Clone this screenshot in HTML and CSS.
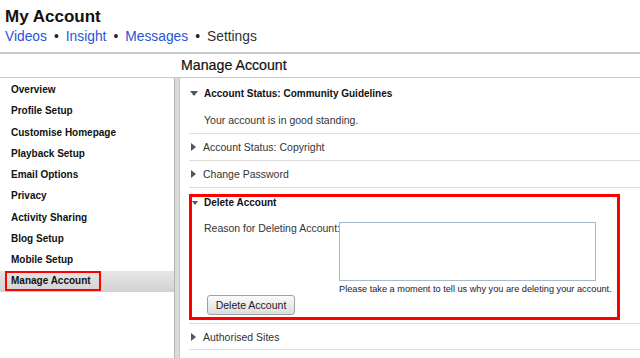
FILE: index.html
```html
<!DOCTYPE html>
<html lang="en">
<head>
    <meta charset="UTF-8">
    <meta name="viewport" content="width=device-width, initial-scale=1.0">
    <title>My Account - Settings</title>
    <link rel="stylesheet" href="styles.css">
</head>
<body>
    <header class="top">
        <h1>My Account</h1>
        <nav class="tabs">
            <a href="#">Videos</a><span class="dot">•</span><a href="#">Insight</a><span class="dot">•</span><a href="#">Messages</a><span class="dot">•</span><span class="current">Settings</span>
        </nav>
    </header>

    <div class="title-bar">
        <h2>Manage Account</h2>
    </div>

    <div class="layout">
        <aside class="sidebar">
            <ul>
                <li>Overview</li>
                <li>Profile Setup</li>
                <li>Customise Homepage</li>
                <li>Playback Setup</li>
                <li>Email Options</li>
                <li>Privacy</li>
                <li>Activity Sharing</li>
                <li>Blog Setup</li>
                <li>Mobile Setup</li>
                <li class="selected"><span class="highlight">Manage Account</span></li>
            </ul>
        </aside>

        <div class="divider"></div>

        <main class="content">
            <section class="panel first">
                <div class="panel-head bold"><span class="caret down"></span>Account Status: Community Guidelines</div>
                <div class="panel-body">Your account is in good standing.</div>
            </section>

            <section class="panel">
                <div class="panel-head"><span class="caret right"></span>Account Status: Copyright</div>
            </section>

            <section class="panel">
                <div class="panel-head"><span class="caret right"></span>Change Password</div>
            </section>

            <section class="panel delete">
                <div class="marked">
                    <div class="delete-head"><span class="caret down"></span>Delete Account</div>
                    <form class="delete-form" onsubmit="event.preventDefault()">
                        <div class="form-row">
                            <label for="reason">Reason for Deleting Account:</label>
                            <textarea id="reason"></textarea>
                        </div>
                        <p class="hint">Please take a moment to tell us why you are deleting your account.</p>
                        <button type="submit" class="btn">Delete Account</button>
                    </form>
                </div>
            </section>

            <section class="panel last">
                <div class="panel-head"><span class="caret right"></span>Authorised Sites</div>
            </section>
        </main>
    </div>
</body>
</html>
```

FILE: styles.css
```css
* {
    margin: 0;
    padding: 0;
    box-sizing: border-box;
}

body {
    font-family: 'Liberation Sans', Arial, sans-serif;
    background: #fff;
    color: #333;
}

.top {
    padding: 7px 5px 6px;
    border-bottom: 2px solid #c8c8c8;
}

.top h1 {
    font-size: 17px;
    line-height: 20px;
    font-weight: 700;
    color: #111;
}

.tabs {
    margin-top: 1px;
    font-size: 13.8px;
    line-height: 18px;
}

.tabs a {
    color: #2a55d6;
    text-decoration: none;
}

.tabs .dot {
    color: #222;
    margin: 0 7px;
}

.tabs .current {
    color: #333;
}

.title-bar {
    border-bottom: 1px solid #c8c8c8;
    padding-left: 181px;
}

.title-bar h2 {
    font-size: 14.2px;
    line-height: 23px;
    font-weight: 400;
    color: #111;
    -webkit-text-stroke: 0.2px #111;
}

.layout {
    display: flex;
    min-height: 280px;
}

/* left menu */
.sidebar {
    width: 174px;
    flex-shrink: 0;
}

.sidebar ul {
    list-style: none;
    padding-top: 1px;
}

.sidebar li {
    height: 21.3px;
    line-height: 21.3px;
    padding-left: 11px;
    font-size: 10px;
    font-weight: 700;
    color: #111;
}

.sidebar li.selected {
    padding-left: 5px;
    background: linear-gradient(#e6e6e6, #d2d2d2);
    display: flex;
    align-items: center;
}

.highlight {
    border: 2px solid #f00;
    line-height: 16px;
    padding: 0 8px 0 4px;
}

.divider {
    width: 6px;
    flex-shrink: 0;
    background: #dadada;
    border-left: 1px solid #b4b4b4;
    border-right: 1px solid #c6c6c6;
}

/* panels */
.content {
    flex: 1;
    padding-left: 9px;
    padding-top: 2px;
    font-size: 10.5px;
}

.panel {
    border-bottom: 1px solid #dedede;
}

.panel-head {
    display: flex;
    align-items: center;
    height: 26px;
    padding-left: 1px;
}

.panel.first .panel-head {
    height: 27px;
}

.panel.last .panel-head {
    height: 25px;
}

.bold,
.delete-head {
    font-weight: 700;
    font-size: 10px;
    color: #111;
}

.panel-body {
    height: 26px;
    line-height: 26px;
    padding-left: 15px;
}

.caret {
    display: inline-block;
    width: 0;
    height: 0;
}

.caret.down {
    border-left: 4px solid transparent;
    border-right: 4px solid transparent;
    border-top: 5px solid #555;
    margin-right: 6px;
}

.caret.right {
    border-top: 4px solid transparent;
    border-bottom: 4px solid transparent;
    border-left: 5px solid #555;
    margin-left: 1px;
    margin-right: 7px;
}

/* delete account */
.panel.delete {
    padding: 6px 0 3px;
}

.marked {
    border: 3px solid #f00;
    margin-right: 20px;
    padding-bottom: 2px;
}

.delete-head {
    display: flex;
    align-items: center;
    line-height: 12px;
}

.delete-head .caret.down {
    border-left-width: 3px;
    border-right-width: 3px;
    border-top-width: 4px;
    margin-right: 6px;
}

.delete-form {
    padding-left: 12px;
}

.form-row {
    display: flex;
    margin-top: 13px;
}

.form-row label {
    width: 135px;
    flex-shrink: 0;
    line-height: 12px;
    white-space: nowrap;
}

.form-row textarea {
    width: 257px;
    height: 59px;
    border: 1px solid #a6bacf;
    resize: none;
    outline: none;
}

.hint {
    margin: 2px 0 0 135px;
    font-size: 9.2px;
    line-height: 12px;
    color: #222;
}

.btn {
    margin-left: 3px;
    width: 88px;
    height: 20px;
    border: 1px solid #a0a0a0;
    border-radius: 3px;
    background: linear-gradient(#fbfbfb, #dcdcdc);
    font-family: 'Liberation Sans', Arial, sans-serif;
    font-size: 10.5px;
    color: #222;
    cursor: pointer;
}
```
